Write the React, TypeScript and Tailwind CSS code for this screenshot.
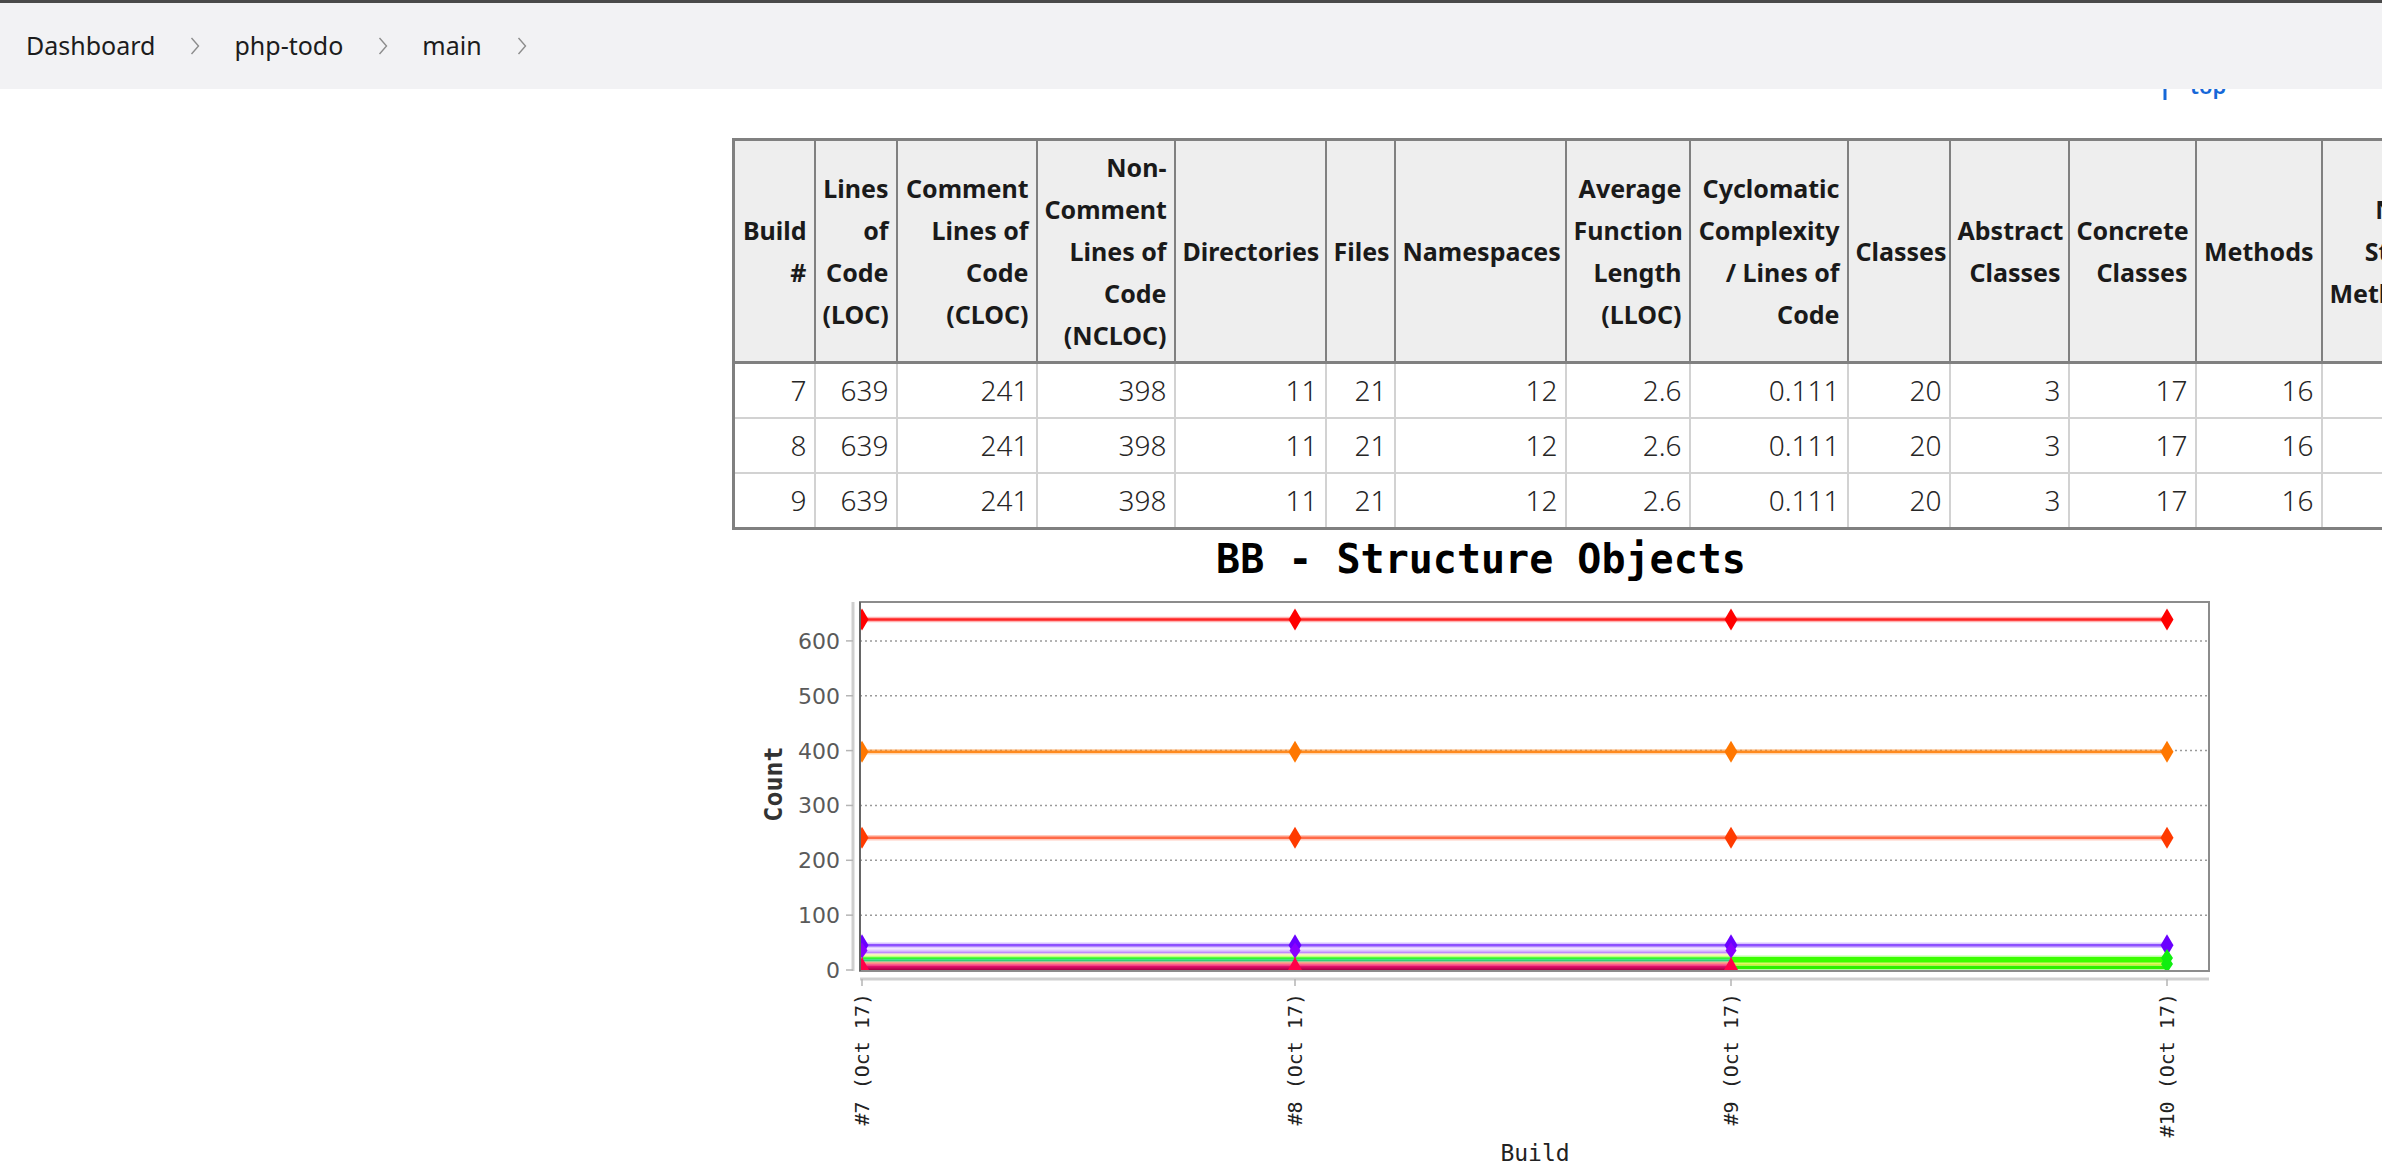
import type { ReactNode } from 'react';

type Col = { w: string; label: string[] };

const columns: Col[] = [
  { w: 'w-[81px]', label: ['Build', '#'] },
  { w: 'w-[82px]', label: ['Lines', 'of', 'Code', '(LOC)'] },
  { w: 'w-[140px]', label: ['Comment', 'Lines of', 'Code', '(CLOC)'] },
  { w: 'w-[138px]', label: ['Non-', 'Comment', 'Lines of', 'Code', '(NCLOC)'] },
  { w: 'w-[151px]', label: ['Directories'] },
  { w: 'w-[69px]', label: ['Files'] },
  { w: 'w-[171px]', label: ['Namespaces'] },
  { w: 'w-[124px]', label: ['Average', 'Function', 'Length', '(LLOC)'] },
  { w: 'w-[158px]', label: ['Cyclomatic', 'Complexity', '/ Lines of', 'Code'] },
  { w: 'w-[102px]', label: ['Classes'] },
  { w: 'w-[119px]', label: ['Abstract', 'Classes'] },
  { w: 'w-[127px]', label: ['Concrete', 'Classes'] },
  { w: 'w-[126px]', label: ['Methods'] },
  { w: 'w-[122px]', label: ['Non-', 'Static', 'Methods'] },
  { w: 'w-[110px]', label: ['Static', 'Methods'] },
  { w: 'w-[110px]', label: ['Public', 'Methods'] },
];

const rows = [
  [7, 639, 241, 398, 11, 21, 12, '2.6', '0.111', 20, 3, 17, 16, 16, 0, 14],
  [8, 639, 241, 398, 11, 21, 12, '2.6', '0.111', 20, 3, 17, 16, 16, 0, 14],
  [9, 639, 241, 398, 11, 21, 12, '2.6', '0.111', 20, 3, 17, 16, 16, 0, 14],
];

function Chevron() {
  return (
    <svg width="10" height="20" viewBox="0 0 10 20" className="ml-[35px] mr-[34px] shrink-0">
      <polyline points="1.5,2 8.5,10 1.5,18" fill="none" stroke="#8c8c8c" strokeWidth="1.4" />
    </svg>
  );
}

function Breadcrumbs() {
  return (
    <header className="h-[89px] shrink-0 border-t-[3px] border-[#4a4a4a] bg-[#f2f2f4] flex items-center pl-[26px] text-[25px] text-[#1c1c1c] font-['Noto_Sans',sans-serif]">
      <span>Dashboard</span>
      <Chevron />
      <span>php-todo</span>
      <Chevron />
      <span>main</span>
      <Chevron />
    </header>
  );
}

// chart helpers, page coordinates
const yv = (v: number) => 969 - v * 0.5485;
const cats = [862, 1295, 1731, 2167];
const catLabels = ['#7 (Oct 17)', '#8 (Oct 17)', '#9 (Oct 17)', '#10 (Oct 17)'];

function Diamond({ x, y, c, w = 6.5, h = 11 }: { x: number; y: number; c: string; w?: number; h?: number }) {
  return <polygon points={`${x},${y - h} ${x + w},${y} ${x},${y + h} ${x - w},${y}`} fill={c} />;
}

function Line({ x1, x2, y, c, w = 2.5 }: { x1: number; x2: number; y: number; c: string; w?: number }) {
  return (
    <g>
      <line x1={x1} x2={x2} y1={y} y2={y} stroke={c} strokeOpacity={0.35} strokeWidth={w + 3} />
      <line x1={x1} x2={x2} y1={y} y2={y} stroke={c} strokeWidth={w} />
    </g>
  );
}

const bigSeries = [
  { v: 639, line: '#ff2424', mark: '#ff0000' },
  { v: 398, line: '#ff8a1f', mark: '#ff7700' },
  { v: 241, line: '#ff6a48', mark: '#ff3a00' },
  { v: 45, line: '#8d50ff', mark: '#6a00ff' },
];

const lowFirst = [
  { y: 948.6, c: '#ecd9ff' },
  { y: 951.6, c: '#c08aff' },
  { y: 954.6, c: '#ffffa8' },
  { y: 957.2, c: '#3cff1a' },
  { y: 959.6, c: '#1fd47a' },
  { y: 962.3, c: '#ff9f80' },
  { y: 964.3, c: '#ff5c8f' },
  { y: 966.4, c: '#e0106a', w: 3 },
  { y: 968.4, c: '#b0004a' },
];

const lowLast = [
  { y: 957.4, c: '#3cff00', w: 3 },
  { y: 960.3, c: '#3cff00', w: 3 },
  { y: 963.4, c: '#f2f24a' },
  { y: 966.6, c: '#2ef000', w: 3 },
];

function Chart() {
  const grid = [100, 200, 300, 400, 500, 600];
  const ticks = [0, 100, 200, 300, 400, 500, 600];
  const markers: ReactNode[] = [];
  cats.forEach((x, i) => {
    bigSeries.forEach((s) => markers.push(<Diamond key={`${i}-${s.v}`} x={x} y={yv(s.v)} c={s.mark} />));
    if (i < 3) {
      markers.push(<Diamond key={`${i}-p`} x={x} y={949.5} c="#8a00ff" w={5.5} h={8} />);
      markers.push(
        <polygon key={`${i}-t`} points={`${x},${956} ${x + 7},${969} ${x - 7},${969}`} fill="#ff0048" />,
      );
    } else {
      markers.push(<Diamond key={`${i}-g1`} x={x} y={957} c="#10ee10" w={6} h={9} />);
      markers.push(<Diamond key={`${i}-g2`} x={x} y={963} c="#10ee10" w={6} h={9} />);
    }
  });

  return (
    <svg width="1498" height="639" viewBox="732 529 1498 639" className="block">
      <text x={1481} y={572} textAnchor="middle" fontFamily="'DejaVu Sans Mono', monospace" fontWeight="bold" fontSize={40} fill="#000">
        BB - Structure Objects
      </text>

      {/* y axis */}
      <line x1={853} x2={853} y1={601} y2={970} stroke="#cfcfcf" strokeWidth={3} />
      {ticks.map((t) => (
        <g key={t}>
          <line x1={846} x2={853} y1={yv(t)} y2={yv(t)} stroke="#b5b5b5" strokeWidth={1.5} />
          <text x={840} y={yv(t) + 8} textAnchor="end" fontFamily="'DejaVu Sans', sans-serif" fontSize={22} fill="#5a5a5a">
            {t}
          </text>
        </g>
      ))}
      <text
        transform="translate(782 783) rotate(-90)"
        textAnchor="middle"
        fontFamily="'DejaVu Sans Mono', monospace"
        fontWeight="bold"
        fontSize={25}
        fill="#333"
      >
        Count
      </text>

      {/* plot */}
      <rect x={860} y={601} width={1349} height={369} fill="#fff" />
      {grid.map((g) => (
        <line key={g} x1={860} x2={2209} y1={yv(g)} y2={yv(g)} stroke="#9a9a9a" strokeWidth={1.5} strokeDasharray="2 3" />
      ))}
      <clipPath id="plotArea">
        <rect x={860} y={601} width={1349} height={369} />
      </clipPath>
      <g clipPath="url(#plotArea)">
        {bigSeries.map((s) => (
          <Line key={s.v} x1={cats[0]} x2={cats[3]} y={yv(s.v)} c={s.line} />
        ))}
        {lowFirst.map((l) => (
          <Line key={l.y} x1={cats[0]} x2={cats[2]} y={l.y} c={l.c} w={l.w ?? 2} />
        ))}
        {lowLast.map((l) => (
          <Line key={l.y} x1={cats[2]} x2={cats[3]} y={l.y} c={l.c} w={l.w ?? 2} />
        ))}
        {markers}
      </g>
      <rect x={860} y={601} width={1349} height={369} fill="none" stroke="#8c8c8c" strokeWidth={2} />
      <line x1={860} x2={860} y1={601} y2={970} stroke="#666" strokeWidth={2} />

      {/* x axis */}
      <line x1={860} x2={2209} y1={978} y2={978} stroke="#cfcfcf" strokeWidth={3} />
      {cats.map((x, i) => (
        <g key={x}>
          <line x1={x} x2={x} y1={978} y2={985} stroke="#b5b5b5" strokeWidth={1.5} />
          <text
            transform={`translate(${x + 7} 992) rotate(-90)`}
            textAnchor="end"
            fontFamily="'DejaVu Sans Mono', monospace"
            fontSize={20}
            fill="#222"
          >
            {catLabels[i]}
          </text>
        </g>
      ))}
      <text x={1535} y={1160} textAnchor="middle" fontFamily="'DejaVu Sans Mono', monospace" fontSize={23} fill="#222">
        Build
      </text>
    </svg>
  );
}

function TrendTable() {
  return (
    <table className="table-fixed border-collapse border-[3px] border-[#808080] w-[1933px] font-['Noto_Sans',sans-serif]">
      <thead>
        <tr className="bg-[#eeeeee]">
          {columns.map((c, i) => (
            <th
              key={i}
              className={`${c.w} border-x-2 border-b-[3px] border-[#808080] px-[7px] py-[5px] text-right align-middle text-[25px] leading-[42px] font-bold text-[#1a1a1a] whitespace-nowrap`}
            >
              {c.label.map((l, j) => (
                <span key={j} className="block">
                  {l}
                </span>
              ))}
            </th>
          ))}
        </tr>
      </thead>
      <tbody>
        {rows.map((r, i) => (
          <tr key={i} className="bg-white">
            {r.map((v, j) => (
              <td
                key={j}
                className="border-2 border-[#d2d2d2] px-[7px] py-[6px] text-right text-[28px] leading-[41px] font-light text-[#262626] whitespace-nowrap"
              >
                {v}
              </td>
            ))}
          </tr>
        ))}
      </tbody>
    </table>
  );
}

export default function App() {
  return (
    <div className="w-[2382px] h-[1168px] overflow-hidden bg-white flex flex-col">
      <Breadcrumbs />
      <div className="flex flex-1">
        <aside className="w-[732px] shrink-0" />
        <main className="flex flex-col min-w-0">
          <div className="h-[11px] overflow-hidden flex items-end pl-[1428px]">
            <a className="flex items-end gap-[20px] mb-[4px] text-[22px] leading-[22px] font-semibold text-[#1668d8] font-['Noto_Sans',sans-serif]">
              <svg width="10" height="24" viewBox="0 0 10 24" className="mb-[-4px]">
                <path d="M5 24V3M1 7l4-5 4 5" fill="none" stroke="#1668d8" strokeWidth="3" />
              </svg>
              <span>top</span>
            </a>
          </div>
          <div className="mt-[38px]">
            <TrendTable />
          </div>
          <Chart />
        </main>
      </div>
    </div>
  );
}
